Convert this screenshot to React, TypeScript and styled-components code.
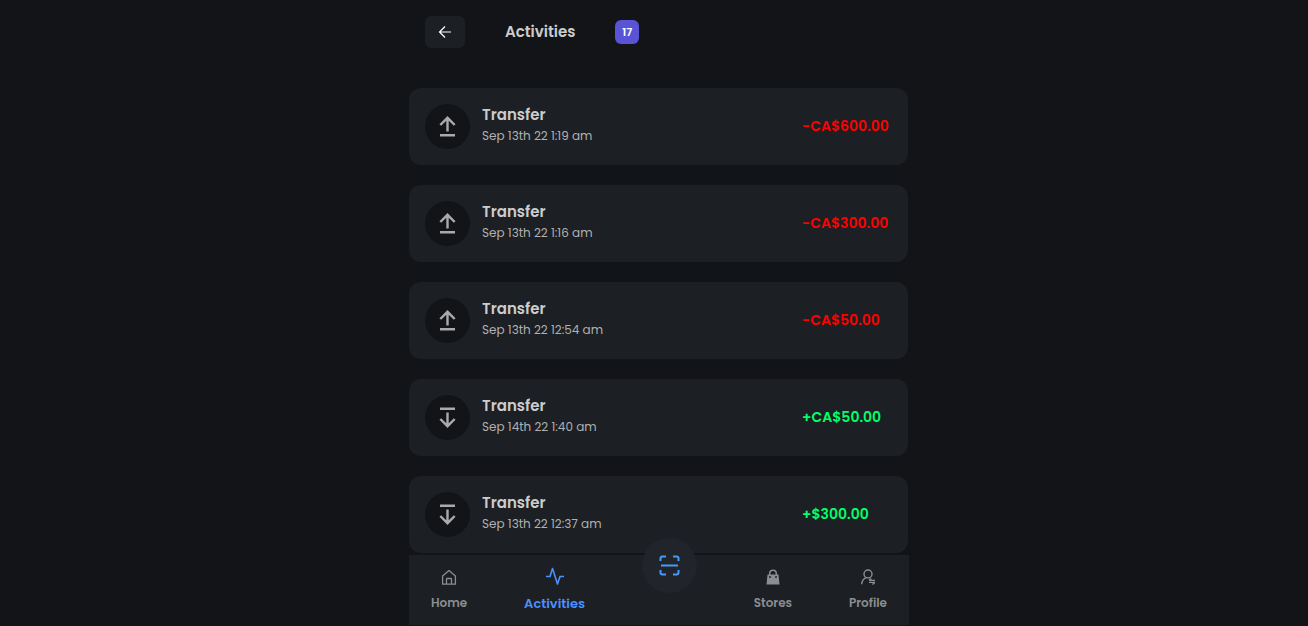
import React from "react";
import styled, { createGlobalStyle } from "styled-components";

const Global = createGlobalStyle`
  * { box-sizing: border-box; }
  body { margin: 0; background: #131418; font-family: Poppins, Lato, sans-serif; }
  button { font: inherit; border: 0; padding: 0; cursor: pointer; }
`;

const Page = styled.div`
  min-height: 100vh;
  padding-left: 10px;
  background: #131418;
  border-bottom: 1px solid #131418;
`;

const Column = styled.div`
  width: 100%;
  max-width: 500px;
  margin: 0 auto;
`;

const Header = styled.header`
  display: flex;
  align-items: center;
  gap: 40px;
  padding: 16px 16px 40px;
`;

const BackButton = styled.button`
  display: grid;
  place-items: center;
  width: 40px;
  height: 32px;
  border-radius: 6px;
  background: #1c1f23;
  color: #ffffff;
`;

const Title = styled.h1`
  margin: 0;
  font-size: 15px;
  line-height: 24px;
  font-weight: 600;
  color: #cccccc;
`;

const Count = styled.span`
  width: 24px;
  border-radius: 6px;
  background: #5953d6;
  color: #ffffff;
  font-size: 11px;
  line-height: 24px;
  font-weight: 600;
  text-align: center;
`;

const List = styled.ul`
  display: flex;
  flex-direction: column;
  gap: 20px;
  margin: 0 1px 2px 0;
  padding: 0;
  list-style: none;
`;

const Card = styled.li`
  display: flex;
  align-items: center;
  gap: 12px;
  height: 77px;
  padding: 0 16px;
  border-radius: 12px;
  background: #1c1f23;
`;

const Disc = styled.span`
  display: grid;
  place-items: center;
  width: 45px;
  height: 45px;
  border-radius: 50%;
  background: #131418;
  color: #aaaaaa;
`;

const Details = styled.div`
  flex: 1;
  padding-bottom: 4px;
`;

const Kind = styled.div`
  font-size: 15px;
  line-height: 22px;
  font-weight: 600;
  color: #cccccc;
`;

const When = styled.time`
  display: block;
  font-size: 12px;
  line-height: 20px;
  color: #b0b0b0;
`;

const Amount = styled.div<{ $credit: boolean }>`
  width: 90px;
  padding-bottom: 2px;
  font-size: 14px;
  line-height: 24px;
  font-weight: 600;
  white-space: nowrap;
  color: ${(p) => (p.$credit ? "#00ff6a" : "#ff0000")};
`;

const Nav = styled.nav`
  position: sticky;
  bottom: 0;
  display: flex;
  justify-content: space-between;
  height: 70px;
  padding: 12px 22px 0;
  background: #1c1f23;
`;

const NavLink = styled.a<{ $active?: boolean }>`
  display: flex;
  flex-direction: column;
  align-items: center;
  gap: ${(p) => (p.$active ? 7 : 6)}px;
  font-size: ${(p) => (p.$active ? 13 : 12)}px;
  line-height: 20px;
  font-weight: 600;
  text-decoration: none;
  color: ${(p) => (p.$active ? "#4a90ff" : "#8b8d90")};
`;

const ScanButton = styled.button`
  display: grid;
  place-items: center;
  width: 55px;
  height: 55px;
  margin-top: -29px;
  border-radius: 50%;
  background: #21252b;
  color: #459bf7;
`;

const BackIcon = () => (
  <svg width="14" height="14" viewBox="0 0 14 14" fill="none" stroke="currentColor" strokeWidth="1.2">
    <path d="M13 7H1.5M7 1.5L1.5 7L7 12.5" />
  </svg>
);

const UpIcon = () => (
  <svg width="23" height="23" viewBox="0 0 23 23" fill="none" stroke="currentColor" strokeWidth="2.4">
    <path d="M11.5 16.5V3M4.3 10L11.5 2.8L18.7 10M4 20.2H19" />
  </svg>
);

const DownIcon = () => (
  <svg width="23" height="23" viewBox="0 0 23 23" fill="none" stroke="currentColor" strokeWidth="2.4">
    <path d="M11.5 6.5V20M4.3 13L11.5 20.2L18.7 13M4 2.8H19" />
  </svg>
);

const HomeIcon = () => (
  <svg width="20" height="20" viewBox="0 0 20 20" fill="none" stroke="currentColor" strokeWidth="1.3" strokeLinejoin="round">
    <path d="M3.6 9L10 3.6L16.4 9V17.2H3.6ZM7.5 17V12.2Q7.5 11.5 8.2 11.5H11.8Q12.5 11.5 12.5 12.2V17" />
  </svg>
);

const PulseIcon = () => (
  <svg width="20" height="20" viewBox="0 0 20 20" fill="none" stroke="currentColor" strokeWidth="1.6" strokeLinejoin="round">
    <path d="M1 9.5H5L7.5 1.5L12.5 17L15 9.5H19" />
  </svg>
);

const ScanIcon = () => (
  <svg width="21" height="21" viewBox="0 0 21 21" fill="none" stroke="currentColor" strokeWidth="2">
    <path d="M1.5 6V3.5Q1.5 1.5 3.5 1.5H7M14 1.5H17.5Q19.5 1.5 19.5 3.5V6M19.5 15V17.5Q19.5 19.5 17.5 19.5H14M7 19.5H3.5Q1.5 19.5 1.5 17.5V15M2 10.5H19" />
  </svg>
);

const BagIcon = () => (
  <svg width="20" height="20" viewBox="0 0 20 20" fill="none">
    <path d="M6.7 8V6.5A3.3 3.3 0 0 1 13.3 6.5V8" stroke="currentColor" strokeWidth="1.5" />
    <path d="M4.5 7.5H15.5L16.5 17.5H3.5Z" fill="currentColor" />
    <circle cx="7" cy="10" r="0.9" fill="#1c1f23" />
    <circle cx="13" cy="10" r="0.9" fill="#1c1f23" />
  </svg>
);

const ProfileIcon = () => (
  <svg width="20" height="20" viewBox="0 0 20 20" fill="none" stroke="currentColor" strokeWidth="1.4">
    <circle cx="10" cy="7" r="4" />
    <path d="M3.7 17.3Q4 12.5 8 10.7M11 13.4H17M11 15.4H17M16.8 15.4L14.5 17.5M11.2 13.4L13.3 11.6" />
  </svg>
);

const activities = [
  { when: "Sep 13th 22 1:19 am", amount: "-CA$600.00", credit: false },
  { when: "Sep 13th 22 1:16 am", amount: "-CA$300.00", credit: false },
  { when: "Sep 13th 22 12:54 am", amount: "-CA$50.00", credit: false },
  { when: "Sep 14th 22 1:40 am", amount: "+CA$50.00", credit: true },
  { when: "Sep 13th 22 12:37 am", amount: "+$300.00", credit: true },
];

export default function App() {
  return (
    <Page>
      <Global />
      <Column>
        <Header>
          <BackButton type="button" aria-label="Back">
            <BackIcon />
          </BackButton>
          <Title>Activities</Title>
          <Count>17</Count>
        </Header>
        <List>
          {activities.map((item) => (
            <Card key={item.when}>
              <Disc>{item.credit ? <DownIcon /> : <UpIcon />}</Disc>
              <Details>
                <Kind>Transfer</Kind>
                <When>{item.when}</When>
              </Details>
              <Amount $credit={item.credit}>{item.amount}</Amount>
            </Card>
          ))}
        </List>
        <Nav>
          <NavLink href="#home">
            <HomeIcon />
            Home
          </NavLink>
          <NavLink href="#activities" $active>
            <PulseIcon />
            Activities
          </NavLink>
          <ScanButton type="button" aria-label="Scan">
            <ScanIcon />
          </ScanButton>
          <NavLink href="#stores">
            <BagIcon />
            Stores
          </NavLink>
          <NavLink href="#profile">
            <ProfileIcon />
            Profile
          </NavLink>
        </Nav>
      </Column>
    </Page>
  );
}
